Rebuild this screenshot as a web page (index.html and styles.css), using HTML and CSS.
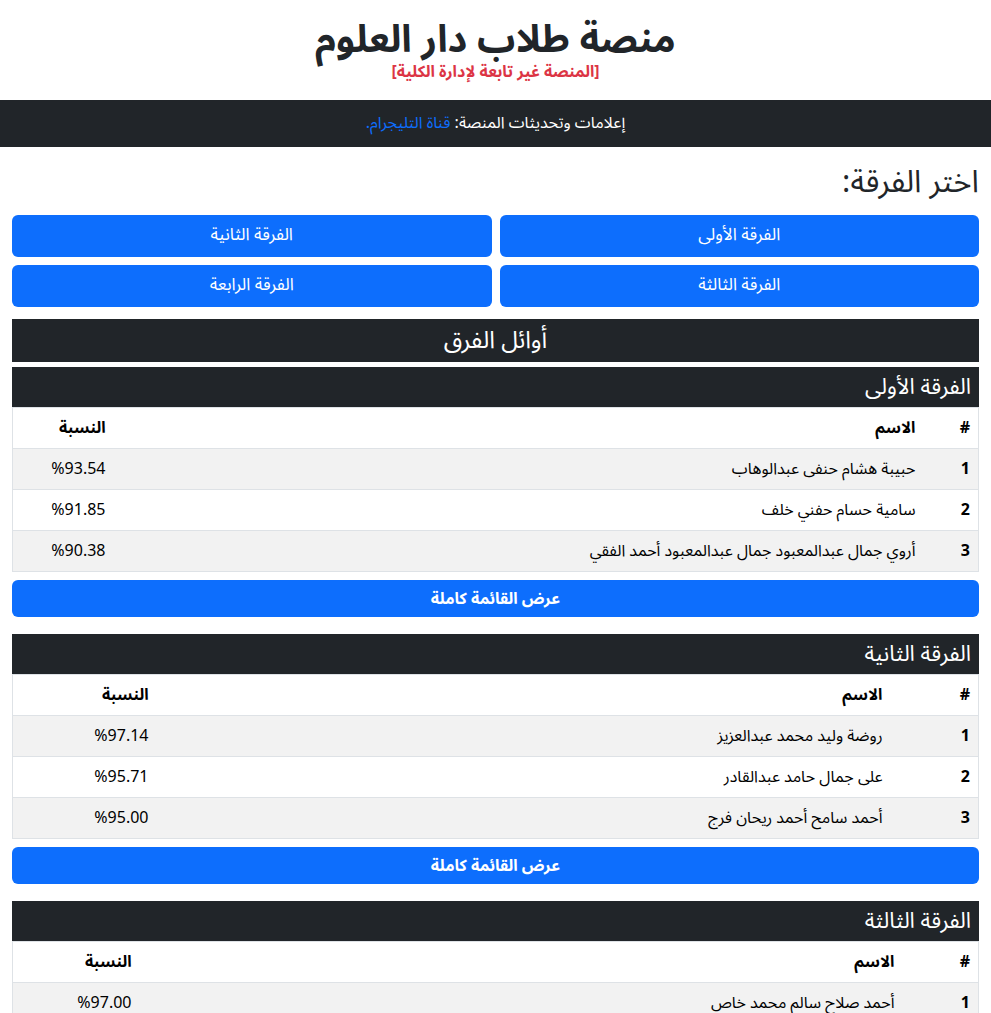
FILE: index.html
```html
<!DOCTYPE html>
<html lang="ar" dir="rtl">
<head>
<meta charset="utf-8">
<title>منصة طلاب دار العلوم</title>
<link rel="stylesheet" href="styles.css">
</head>
<body>
<header class="site-header">
  <h1 class="site-title">منصة طلاب دار العلوم</h1>
  <p class="site-note">[المنصة غير تابعة لإدارة الكلية]</p>
</header>
<div class="notice-bar">إعلامات وتحديثات المنصة: <a href="#" class="notice-link">قناة التليجرام.</a></div>
<main class="container">
  <h2 class="choose-title">اختر الفرقة:</h2>
  <div class="year-grid">
    <a href="#" class="btn btn-year">الفرقة الأولى</a>
    <a href="#" class="btn btn-year">الفرقة الثانية</a>
    <a href="#" class="btn btn-year">الفرقة الثالثة</a>
    <a href="#" class="btn btn-year">الفرقة الرابعة</a>
  </div>
  <h3 class="top-title">أوائل الفرق</h3>

  <section class="year-block">
    <h4 class="year-title">الفرقة الأولى</h4>
    <table class="rank-table">
      <colgroup><col class="col-num" style="width:55px"><col><col class="col-pct" style="width:101px"></colgroup>
      <thead><tr><th>#</th><th>الاسم</th><th>النسبة</th></tr></thead>
      <tbody>
        <tr><td class="num">1</td><td>حبيبة هشام حنفى عبدالوهاب</td><td>%93.54</td></tr>
        <tr><td class="num">2</td><td>سامية حسام حفني خلف</td><td>%91.85</td></tr>
        <tr><td class="num">3</td><td>أروي جمال عبدالمعبود جمال عبدالمعبود أحمد الفقي</td><td>%90.38</td></tr>
      </tbody>
    </table>
    <a href="#" class="btn btn-full">عرض القائمة كاملة</a>
  </section>

  <section class="year-block">
    <h4 class="year-title">الفرقة الثانية</h4>
    <table class="rank-table">
      <colgroup><col class="col-num" style="width:88px"><col><col class="col-pct" style="width:144px"></colgroup>
      <thead><tr><th>#</th><th>الاسم</th><th>النسبة</th></tr></thead>
      <tbody>
        <tr><td class="num">1</td><td>روضة وليد محمد عبدالعزيز</td><td>%97.14</td></tr>
        <tr><td class="num">2</td><td>على جمال حامد عبدالقادر</td><td>%95.71</td></tr>
        <tr><td class="num">3</td><td>أحمد سامح أحمد ريحان فرج</td><td>%95.00</td></tr>
      </tbody>
    </table>
    <a href="#" class="btn btn-full">عرض القائمة كاملة</a>
  </section>

  <section class="year-block">
    <h4 class="year-title">الفرقة الثالثة</h4>
    <table class="rank-table">
      <colgroup><col class="col-num" style="width:76px"><col><col class="col-pct" style="width:127px"></colgroup>
      <thead><tr><th>#</th><th>الاسم</th><th>النسبة</th></tr></thead>
      <tbody>
        <tr><td class="num">1</td><td>أحمد صلاح سالم محمد خاص</td><td>%97.00</td></tr>
        <tr><td class="num">2</td><td>محمد أحمد عبدالله محمود</td><td>%96.50</td></tr>
        <tr><td class="num">3</td><td>مريم خالد محمد علي</td><td>%96.00</td></tr>
      </tbody>
    </table>
    <a href="#" class="btn btn-full">عرض القائمة كاملة</a>
  </section>
</main>
</body>
</html>
```
FILE: styles.css
```css
* { box-sizing: border-box; }
html, body { margin: 0; padding: 0; }
body {
  font-family: "Noto Sans Arabic", "Noto Sans", "DejaVu Sans", sans-serif;
  font-size: 16px;
  line-height: 1.5;
  color: #212529;
  background: #fff;
}
.site-header {
  text-align: center;
  padding: 18px 12px 19px;
}
.site-title {
  margin: 0;
  font-size: 38px;
  line-height: 44px;
  font-weight: 700;
  color: #212529;
}
.site-note {
  margin: 1px 0 0;
  font-size: 16px;
  line-height: 18px;
  font-weight: 700;
  color: #dc3545;
}
.notice-bar {
  background: #212529;
  color: #fff;
  text-align: center;
  height: 47px;
  line-height: 47px;
  font-size: 16px;
}
.notice-link { color: #0d6efd; text-decoration: none; }
.container { padding: 0 12px; }
.choose-title {
  margin: 18px 0 16px;
  font-size: 31px;
  line-height: 34px;
  font-weight: 400;
}
.btn {
  display: flex;
  align-items: center;
  justify-content: center;
  background: #0d6efd;
  color: #fff;
  text-decoration: none;
  border-radius: 6px;
}
.year-grid {
  display: grid;
  grid-template-columns: 1fr 1fr;
  gap: 8px;
}
.btn-year { height: 42px; font-size: 17px; }
.top-title {
  margin: 12px 0 5px;
  background: #212529;
  color: #fff;
  text-align: center;
  font-size: 24px;
  font-weight: 400;
  height: 43px;
  line-height: 43px;
}
.year-block { margin-bottom: 17px; }
.year-title {
  margin: 0;
  background: #212529;
  color: #fff;
  font-size: 22px;
  font-weight: 400;
  height: 40px;
  line-height: 40px;
  padding: 0 8px;
}
.rank-table {
  width: 100%;
  border-collapse: collapse;
  border: 1px solid #dee2e6;
  color: #000;
}
.rank-table th, .rank-table td {
  text-align: right;
  padding: 8px;
  border-bottom: 1px solid #dee2e6;
  height: 41px;
}
.rank-table th { font-weight: 700; }
.rank-table tbody tr:nth-child(odd) { background: #f2f2f2; }
.rank-table .num { font-weight: 700; }
.btn-full {
  margin-top: 8px;
  height: 37px;
  font-weight: 700;
  font-size: 16px;
}
```
